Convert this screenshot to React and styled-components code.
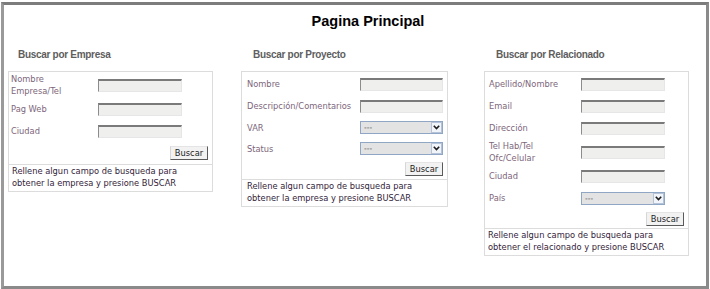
import React from 'react';
import styled, { createGlobalStyle } from 'styled-components';

const GlobalStyle = createGlobalStyle`
  html, body { margin: 0; padding: 0; background: #fff; }
  body { font-family: "DejaVu Sans", Verdana, sans-serif; }
`;

const Frame = styled.div`
  box-sizing: border-box;
  margin: 2px 0 0 1px;
  width: 708px;
  height: 287px;
  border-style: solid;
  border-width: 3px;
  border-color: #7c7c7c #8a8a8a #8a8a8a #9a9a9a;
  background: #fff;
`;

const Title = styled.h1`
  box-sizing: border-box;
  margin: 0;
  height: 26px;
  padding: 7px 0 0 26px;
  text-align: center;
  font: bold 14.5px/18px "Liberation Sans", Arial, sans-serif;
  color: #000;
`;

const Columns = styled.div`
  display: flex;
  align-items: flex-start;
  margin-top: 17px;
`;

const Column = styled.section`
  flex: none;
  width: ${p => p.$width}px;
  margin-left: ${p => p.$offset}px;
`;

const Heading = styled.h2`
  margin: 0 0 9px;
  padding-left: ${p => p.$indent}px;
  font: bold 10px/14px "Liberation Sans", Arial, sans-serif;
  letter-spacing: -0.3px;
  color: #5e5e5e;
`;

const Box = styled.div`
  border: 1px solid #dcdcdc;
`;

const Fields = styled.div`
  padding: ${p => p.$pt}px 4px 0 ${p => p.$pl}px;
`;

const Row = styled.div`
  display: flex;
  align-items: center;
  height: ${p => p.$h}px;
`;

const Label = styled.label`
  flex: none;
  box-sizing: border-box;
  width: ${p => p.$w}px;
  padding-right: 6px;
  font-size: 8.3px;
  line-height: 12px;
  color: #7d667b;
`;

const TextInput = styled.input`
  box-sizing: border-box;
  width: ${p => p.$w}px;
  height: 13px;
  margin: 0;
  padding: 0 2px;
  background: #efefed;
  border-style: solid;
  border-width: 2px 1px 1px 1px;
  border-color: #7a7a7a #e6e6e6 #e6e6e6 #8c8c8c;
  outline: none;
`;

const SelectWrap = styled.div`
  box-sizing: border-box;
  display: flex;
  align-items: center;
  width: ${p => p.$w}px;
  height: 13px;
  border: 1px solid #8fa6c4;
  background: #e3e3e3;
`;

const Select = styled.select`
  flex: 1;
  min-width: 0;
  height: 100%;
  margin: 0;
  padding: 0 0 0 3px;
  border: 0;
  background: transparent;
  appearance: none;
  font: 7.5px/11px "DejaVu Sans", Verdana, sans-serif;
  color: #444;
  outline: none;
`;

const ArrowBox = styled.span`
  box-sizing: border-box;
  flex: none;
  display: flex;
  align-items: center;
  justify-content: center;
  width: 11px;
  height: 11px;
  border: 1px solid #b5c3d8;
  background: #f1f4f9;
`;

const ButtonRow = styled.div`
  display: flex;
  justify-content: flex-end;
  align-items: center;
  height: ${p => p.$h}px;
`;

const Button = styled.button`
  box-sizing: border-box;
  width: 38px;
  height: 14px;
  margin: 0;
  padding: 0;
  background: #f2f2f2;
  border: 1px solid;
  border-color: #e4e4e4 #5a5a5a #5a5a5a #d6d6d6;
  font: 8.3px/12px "DejaVu Sans", Verdana, sans-serif;
  color: #222;
`;

const Help = styled.p`
  margin: 0;
  border-top: 1px solid #dcdcdc;
  padding: 0 3px 2px ${p => p.$pl}px;
  font-size: 8.3px;
  line-height: 12px;
  color: #33243a;
`;

const Chevron = () => (
  <svg width="7" height="5" viewBox="0 0 7 5">
    <path d="M0.8 0.8 L3.5 3.6 L6.2 0.8" fill="none" stroke="#1c1c1c" strokeWidth="1.6" />
  </svg>
);

const sections = [
  {
    title: 'Buscar por Empresa',
    width: 205, offset: 4, indent: 10, pt: 0, pl: 2, labelW: 87, inputW: 84, buttonH: 22, helpPl: 3,
    rows: [
      { label: ['Nombre', 'Empresa/Tel'], h: 26 },
      { label: ['Pag Web'], h: 22 },
      { label: ['Ciudad'], h: 22 },
    ],
    help: ['Rellene algun campo de busqueda para', 'obtener la empresa y presione BUSCAR'],
  },
  {
    title: 'Buscar por Proyecto',
    width: 207, offset: 28, indent: 12, pt: 1, pl: 5, labelW: 113, inputW: 83, buttonH: 20, helpPl: 5,
    rows: [
      { label: ['Nombre'], h: 22 },
      { label: ['Descripción/Comentarios'], h: 22 },
      { label: ['VAR'], h: 21, select: true },
      { label: ['Status'], h: 21, select: true },
    ],
    help: ['Rellene algun campo de busqueda para', 'obtener la empresa y presione BUSCAR'],
  },
  {
    title: 'Buscar por Relacionado',
    width: 205, offset: 36, indent: 12, pt: 1, pl: 4, labelW: 92, inputW: 84, buttonH: 19, helpPl: 3,
    rows: [
      { label: ['Apellido/Nombre'], h: 22 },
      { label: ['Email'], h: 22 },
      { label: ['Dirección'], h: 22 },
      { label: ['Tel Hab/Tel', 'Ofc/Celular'], h: 26 },
      { label: ['Ciudad'], h: 22 },
      { label: ['País'], h: 22, select: true },
    ],
    help: ['Rellene algun campo de busqueda para', 'obtener el relacionado y presione BUSCAR'],
  },
];

const Lines = ({ lines }) =>
  lines.map((l, i) => (
    <React.Fragment key={i}>
      {i > 0 && <br />}
      {l}
    </React.Fragment>
  ));

export default function App() {
  return (
    <>
      <GlobalStyle />
      <Frame>
        <Title>Pagina Principal</Title>
        <Columns>
          {sections.map(s => (
            <Column key={s.title} $width={s.width} $offset={s.offset}>
              <Heading $indent={s.indent}>{s.title}</Heading>
              <Box>
                <Fields $pt={s.pt} $pl={s.pl}>
                  {s.rows.map(r => (
                    <Row key={r.label.join(' ')} $h={r.h}>
                      <Label $w={s.labelW}>
                        <Lines lines={r.label} />
                      </Label>
                      {r.select ? (
                        <SelectWrap $w={s.inputW}>
                          <Select defaultValue="---">
                            <option>---</option>
                          </Select>
                          <ArrowBox>
                            <Chevron />
                          </ArrowBox>
                        </SelectWrap>
                      ) : (
                        <TextInput type="text" $w={s.inputW} />
                      )}
                    </Row>
                  ))}
                  <ButtonRow $h={s.buttonH}>
                    <Button type="button">Buscar</Button>
                  </ButtonRow>
                </Fields>
                <Help $pl={s.helpPl}>
                  <Lines lines={s.help} />
                </Help>
              </Box>
            </Column>
          ))}
        </Columns>
      </Frame>
    </>
  );
}
